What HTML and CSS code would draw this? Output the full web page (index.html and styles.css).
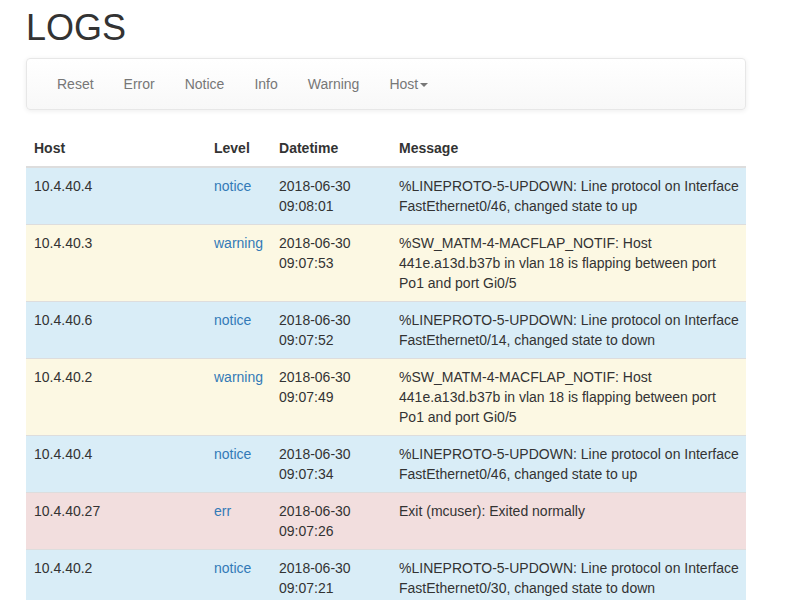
FILE: index.html
```html
<!DOCTYPE html>
<html>
<head>
<meta charset="utf-8">
<link rel="stylesheet" href="styles.css">
</head>
<body>
<div class="page">
  <h1 class="title">LOGS</h1>
  <nav class="navbar">
    <ul class="nav">
      <li><a href="#">Reset</a></li>
      <li><a href="#">Error</a></li>
      <li><a href="#">Notice</a></li>
      <li><a href="#">Info</a></li>
      <li><a href="#">Warning</a></li>
      <li><a href="#">Host<span class="caret"></span></a></li>
    </ul>
  </nav>
  <table class="logs">
    <thead>
      <tr><th class="c-host">Host</th><th class="c-level">Level</th><th class="c-date">Datetime</th><th class="c-msg">Message</th></tr>
    </thead>
    <tbody>
      <tr class="info"><td>10.4.40.4</td><td><a href="#">notice</a></td><td>2018-06-30 09:08:01</td><td class="msg">%LINEPROTO-5-UPDOWN: Line protocol on Interface FastEthernet0/46, changed state to up</td></tr>
      <tr class="warning"><td>10.4.40.3</td><td><a href="#">warning</a></td><td>2018-06-30 09:07:53</td><td class="msg">%SW_MATM-4-MACFLAP_NOTIF: Host 441e.a13d.b37b in vlan 18 is flapping between port Po1 and port Gi0/5</td></tr>
      <tr class="info"><td>10.4.40.6</td><td><a href="#">notice</a></td><td>2018-06-30 09:07:52</td><td class="msg">%LINEPROTO-5-UPDOWN: Line protocol on Interface FastEthernet0/14, changed state to down</td></tr>
      <tr class="warning"><td>10.4.40.2</td><td><a href="#">warning</a></td><td>2018-06-30 09:07:49</td><td class="msg">%SW_MATM-4-MACFLAP_NOTIF: Host 441e.a13d.b37b in vlan 18 is flapping between port Po1 and port Gi0/5</td></tr>
      <tr class="info"><td>10.4.40.4</td><td><a href="#">notice</a></td><td>2018-06-30 09:07:34</td><td class="msg">%LINEPROTO-5-UPDOWN: Line protocol on Interface FastEthernet0/46, changed state to up</td></tr>
      <tr class="danger"><td>10.4.40.27</td><td><a href="#">err</a></td><td>2018-06-30 09:07:26</td><td class="msg">Exit (mcuser): Exited normally</td></tr>
      <tr class="info"><td>10.4.40.2</td><td><a href="#">notice</a></td><td>2018-06-30 09:07:21</td><td class="msg">%LINEPROTO-5-UPDOWN: Line protocol on Interface FastEthernet0/30, changed state to down</td></tr>
    </tbody>
  </table>
</div>
</body>
</html>
```
FILE: styles.css
```css
html, body {
  margin: 0;
  padding: 0;
  background: #fff;
}
body {
  font-family: "Liberation Sans", Arial, sans-serif;
  font-size: 14px;
  line-height: 20px;
  color: #333;
}
.page {
  width: 720px;
  padding-left: 26px;
}
.title {
  margin: 8px 0 10px;
  font-size: 36px;
  line-height: 39.6px;
  font-weight: 500;
  color: #333;
}
.navbar {
  min-height: 50px;
  border: 1px solid #e7e7e7;
  border-radius: 4px;
  background: linear-gradient(to bottom, #fff 0%, #f8f8f8 100%);
  box-shadow: inset 0 1px 0 rgba(255,255,255,.15), 0 1px 5px rgba(0,0,0,.075);
  margin-bottom: 20px;
  padding: 0 15px;
}
.nav {
  display: flex;
  list-style: none;
  margin: 0;
  padding: 0;
}
.nav a {
  display: block;
  padding: 15px;
  color: #777;
  text-decoration: none;
  line-height: 20px;
}
.caret {
  display: inline-block;
  width: 0;
  height: 0;
  margin-left: 2px;
  vertical-align: middle;
  border-top: 4px solid #777;
  border-left: 4px solid transparent;
  border-right: 4px solid transparent;
}
.logs {
  width: 720px;
  border-collapse: collapse;
  border-spacing: 0;
}
.logs th {
  text-align: left;
  font-weight: bold;
  padding: 8px;
  border-bottom: 2px solid #ddd;
  vertical-align: bottom;
}
.logs td {
  padding: 8px;
  border-top: 1px solid #ddd;
  vertical-align: top;
}
.logs td.msg {
  padding-right: 4px;
}
.c-host { width: 164px; }
.c-level { width: 49px; }
.c-date { width: 104px; }
.logs a {
  color: #337ab7;
  text-decoration: none;
}
.info td { background: #d9edf7; }
.warning td { background: #fcf8e3; }
.danger td { background: #f2dede; }
```
